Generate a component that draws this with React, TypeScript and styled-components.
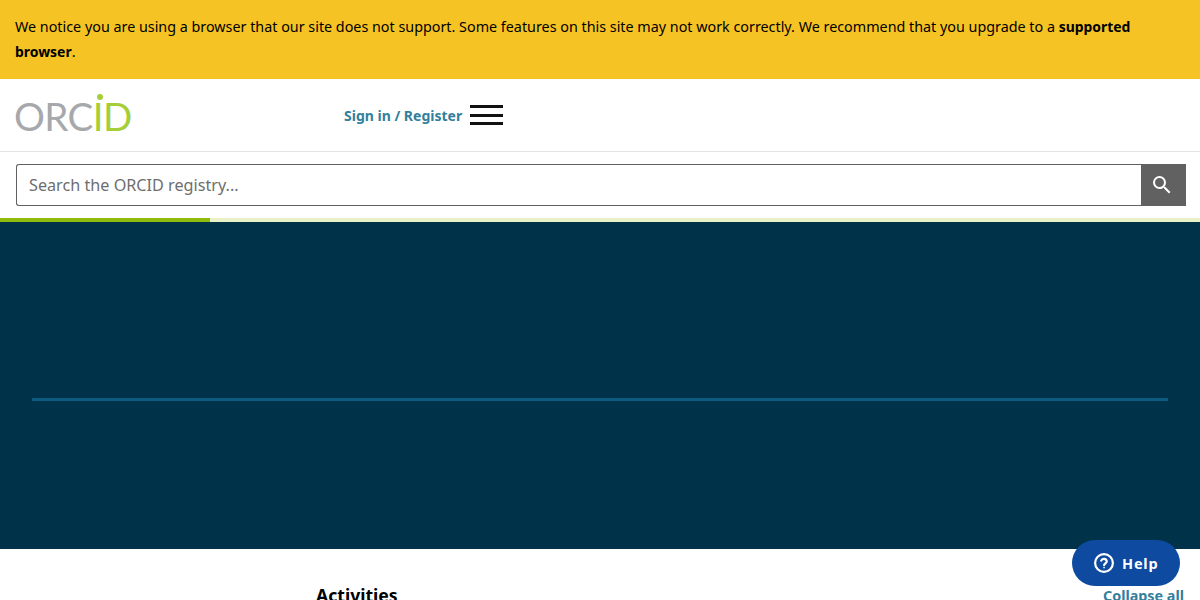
import styled, { createGlobalStyle } from 'styled-components'

const GlobalStyle = createGlobalStyle`
  html, body {
    margin: 0;
    padding: 0;
    height: 600px;
    overflow: hidden;
    background: #fff;
    font-family: 'Noto Sans', sans-serif;
  }
  * {
    box-sizing: border-box;
  }
`

const App = () => {
  return (
    <Page>
      <GlobalStyle />
      <Banner>
        We notice you are using a browser that our site does not support. Some features on this site may not work
        correctly. We recommend that you upgrade to a <strong>supported browser</strong>.
      </Banner>
      <Header>
        <Logo aria-label="ORCID">
          <span>ORC</span>
          <LogoGreen>
            <LogoDot />
            ID
          </LogoGreen>
        </Logo>
        <SignIn href="#">Sign in / Register</SignIn>
        <Burger aria-label="Menu">
          <span />
          <span />
          <span />
        </Burger>
      </Header>
      <SearchBar>
        <SearchInput placeholder="Search the ORCID registry..." />
        <SearchButton aria-label="Search">
          <svg width="24" height="24" viewBox="0 0 24 24" fill="#fff">
            <path d="M15.5 14h-.79l-.28-.27A6.47 6.47 0 0 0 16 9.5 6.5 6.5 0 1 0 9.5 16c1.61 0 3.09-.59 4.23-1.57l.27.28v.79l5 4.99L20.49 19l-4.99-5zm-6 0C7.01 14 5 11.99 5 9.5S7.01 5 9.5 5 14 7.01 14 9.5 11.99 14 9.5 14z" />
          </svg>
        </SearchButton>
      </SearchBar>
      <Progress>
        <ProgressFill />
      </Progress>
      <Hero>
        <HeroLine />
      </Hero>
      <ActivitiesRow>
        <ActivitiesTitle>Activities</ActivitiesTitle>
        <Collapse href="#">Collapse all</Collapse>
      </ActivitiesRow>
      <HelpButton>
        <svg width="22" height="22" viewBox="0 0 22 22" fill="none" stroke="#fff" strokeWidth="2.2">
          <circle cx="11" cy="11" r="8.9" />
          <path d="M8.2 8.7a2.9 2.9 0 0 1 5.6.6c0 1.8-2.6 2.2-2.7 3.9" strokeLinecap="round" />
          <circle cx="11.05" cy="15.7" r="0.45" fill="#fff" strokeWidth="1" />
        </svg>
        Help
      </HelpButton>
    </Page>
  )
}

export default App

const Page = styled.div`
  position: relative;
  width: 1200px;
  height: 600px;
  overflow: hidden;
`

const Banner = styled.div`
  height: 79px;
  padding: 14px 15px 0;
  background: #f6c324;
  color: #000;
  font-size: 14.33px;
  line-height: 25px;
  strong {
    font-size: 13.95px;
    font-weight: 700;
  }
`

const Header = styled.div`
  display: flex;
  align-items: center;
  height: 73px;
  padding-left: 14px;
  border-bottom: 1px solid #e4e4e4;
`

const Logo = styled.div`
  display: flex;
  width: 330px;
  padding-top: 2px;
  font-family: 'Lato', sans-serif;
  font-size: 38.6px;
  line-height: 46px;
  letter-spacing: -0.6px;
  color: #a6a8ab;
`

const LogoGreen = styled.span`
  position: relative;
  color: #a6ce39;
`

const LogoDot = styled.i`
  position: absolute;
  left: 4px;
  top: 1px;
  width: 6px;
  height: 6px;
  border-radius: 50%;
  background: #a6ce39;
`

const SignIn = styled.a`
  margin-right: 8px;
  color: #337f9c;
  font-size: 14px;
  font-weight: 700;
  text-decoration: none;
`

const Burger = styled.div`
  display: flex;
  flex-direction: column;
  gap: 5.5px;
  width: 33px;
  span {
    height: 3px;
    background: #111;
  }
`

const SearchBar = styled.div`
  display: flex;
  height: 66px;
  padding: 12px 14px 12px 16px;
`

const SearchInput = styled.input`
  flex: 1;
  height: 42px;
  padding: 0 12px;
  border: 1px solid #616161;
  border-right: none;
  border-radius: 3px 0 0 3px;
  outline: none;
  background: #fff;
  font-family: 'Noto Sans', sans-serif;
  font-size: 16.2px;
  &::placeholder {
    color: #6e6e6e;
    opacity: 1;
  }
`

const SearchButton = styled.button`
  display: flex;
  align-items: center;
  justify-content: center;
  width: 45px;
  height: 42px;
  padding: 0 3px 0 0;
  border: none;
  background: #616161;
`

const Progress = styled.div`
  height: 4px;
  background: #e9f2c6;
`

const ProgressFill = styled.div`
  width: 210px;
  height: 100%;
  background: #8fbb0e;
`

const Hero = styled.div`
  height: 327px;
  padding: 176px 32px 0;
  background: #003349;
`

const HeroLine = styled.div`
  height: 3px;
  background: #0b5c80;
`

const ActivitiesRow = styled.div`
  display: flex;
  justify-content: space-between;
  align-items: flex-start;
  padding: 34px 16px 0 316px;
`

const ActivitiesTitle = styled.h2`
  margin: 0;
  color: #000;
  font-size: 17.6px;
  font-weight: 700;
  line-height: 24px;
`

const Collapse = styled.a`
  margin-top: 3px;
  color: #337f9c;
  font-size: 14.35px;
  font-weight: 700;
  line-height: 20px;
  text-decoration: none;
`

const HelpButton = styled.div`
  position: absolute;
  left: 1072px;
  top: 540px;
  display: flex;
  align-items: center;
  gap: 7px;
  width: 108px;
  height: 46px;
  padding-left: 21px;
  border-radius: 23px;
  background: #0d4aa0;
  color: #fff;
  font-size: 14.5px;
  font-weight: 700;
  letter-spacing: 0.8px;
`
